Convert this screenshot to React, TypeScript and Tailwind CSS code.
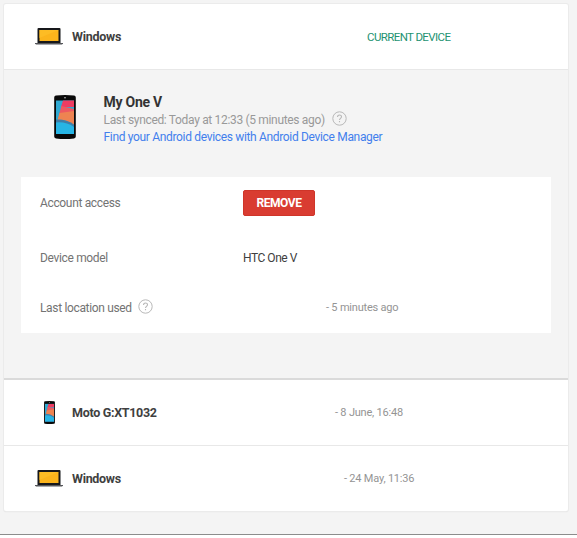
type IconProps = { className?: string };

const recentDevices = [
  { name: 'Moto G:XT1032', seen: '- 8 June, 16:48', icon: 'phone', row: 'grid-cols-[68px_263px_1fr] h-[66px] border-b border-[#e8e8e8]' },
  { name: 'Windows', seen: '- 24 May, 11:36', icon: 'laptop', row: 'grid-cols-[68px_272px_1fr] h-[65px]' },
];

function LaptopIcon({ className }: IconProps) {
  return (
    <svg className={className} width="28" height="17" viewBox="0 0 28 17">
      <path d="M3.500 0h21a1 1 0 0 1 1 1v14h-23V1a1 1 0 0 1 1-1z" fill="#17181b" />
      <rect x="4.500" y="2" width="19" height="11" fill="#fbb41c" />
      <path d="M4.500 2h19l-19 8z" fill="#fdbc24" />
      <path d="M0 15h28v.5l-1 1H1l-1-1z" fill="#55565a" />
    </svg>
  );
}

function PhoneIcon({ className }: IconProps) {
  return (
    <svg className={className} viewBox="0 0 22 44" preserveAspectRatio="none">
      <path d="M2 .5Q11-.5 20 .5q1.700 0 1.800 2v39q0 1.700-1.800 2-9 1-18 0-1.800-.3-1.800-2v-39q.1-2 1.800-2z" fill="#090909" />
      <rect x="2" y="5.500" width="18" height="33.500" fill="#2fa9d2" />
      <path d="M9 5.500h11V12H7z" fill="#ee3c62" />
      <path d="M7.300 11L20 14v6H5z" fill="#ed5961" />
      <path d="M5.500 18L20 16v14Q11 24 3.500 25z" fill="#ee8351" />
      <path d="M2 24.500q10-.5 18 5V39H2z" fill="#3f7ea8" />
      <path d="M2 27.500q10-1 18 4.500v7H2z" fill="#27b5e5" />
      <circle cx="11" cy="2.800" r=".8" fill="#ccc" />
    </svg>
  );
}

function HelpIcon({ className }: IconProps) {
  return (
    <svg className={className} width="15" height="15" viewBox="0 0 15 15" fill="none" stroke="#b8b8b8">
      <circle cx="7.500" cy="7.500" r="6.700" />
      <path d="M5.500 6c0-2.700 4-2.600 4-.2 0 1.500-2 1.600-2 3.200M7.500 10v1.200" strokeWidth="1.100" />
    </svg>
  );
}

export default function App() {
  return (
    <div className="h-[538px] w-[577px] overflow-hidden bg-white font-[Roboto,sans-serif] text-[12px] leading-4 tracking-[-0.34px] text-[#737373]">
      <div className="h-[535px] border-b border-[#8c8c8c] bg-[#f4f4f4] pt-1 pl-1">
        <div className="h-[507px] w-[564px] rounded-[2px] bg-white shadow-[0_0_0_1px_#ebebeb,0_1px_1px_0_#d8d8d8]">
          <div className="grid h-[65px] grid-cols-[68px_295px_1fr] items-center">
            <LaptopIcon className="ml-[31px]" />
            <span className="text-[12.5px] font-bold tracking-[-0.25px] text-[#404040]">Windows</span>
            <span className="pt-px text-[11.5px] tracking-[-0.6px] text-[#239271]">CURRENT DEVICE</span>
          </div>

          <section className="h-[311px] border-t border-b-2 border-t-[#e8e8e8] border-b-[#dadada] bg-[#f4f4f4] px-[17px]">
            <div className="flex h-[107px] pt-6 pl-[33px]">
              <PhoneIcon className="mt-px h-[44px] w-[22px]" />
              <div className="ml-[27.5px] leading-[17px]">
                <h2 className="mb-px text-[14px] font-bold tracking-[-0.25px] text-[#333]">My One V</h2>
                <div className="flex items-center tracking-[-0.33px] text-[#999]">
                  Last synced: Today at 12:33 (5 minutes ago)
                  <HelpIcon className="-mt-[4px] ml-[7px]" />
                </div>
                <a href="#" className="tracking-[-0.33px] text-[#427fed]">Find your Android devices with Android Device Manager</a>
              </div>
            </div>

            <div className="h-[156px] w-[530px] bg-white pt-[13px] pl-[19px]">
              <div className="grid h-[26px] grid-cols-[203px_1fr] items-center">
                <span>Account access</span>
                <button className="h-[26px] w-[72px] rounded-[2px] border border-[#cf3529] bg-[#d93c31] text-[12px] font-bold tracking-[-0.45px] text-white">REMOVE</button>
              </div>
              <div className="mt-[34px] grid grid-cols-[203px_1fr]">
                <span>Device model</span>
                <span className="tracking-[-0.45px] text-[#404040]">HTC One V</span>
              </div>
              <div className="mt-[33px] grid grid-cols-[286px_1fr]">
                <span className="flex items-center">
                  Last location used
                  <HelpIcon className="-mt-[3px] ml-1.5" />
                </span>
                <span className="text-[11px] leading-[17px] tracking-[-0.2px] text-[#949494]">- 5 minutes ago</span>
              </div>
            </div>
          </section>

          {recentDevices.map((device) => (
            <div key={device.name} className={`grid items-center ${device.row}`}>
              {device.icon === 'phone' ? <PhoneIcon className="ml-10 h-[23px] w-[11px]" /> : <LaptopIcon className="ml-[31px]" />}
              <span className="text-[12.5px] font-bold tracking-[-0.3px] text-[#404040]">{device.name}</span>
              <span className="pt-px text-[11px] tracking-[-0.2px] text-[#949494]">{device.seen}</span>
            </div>
          ))}
        </div>
      </div>
    </div>
  );
}
